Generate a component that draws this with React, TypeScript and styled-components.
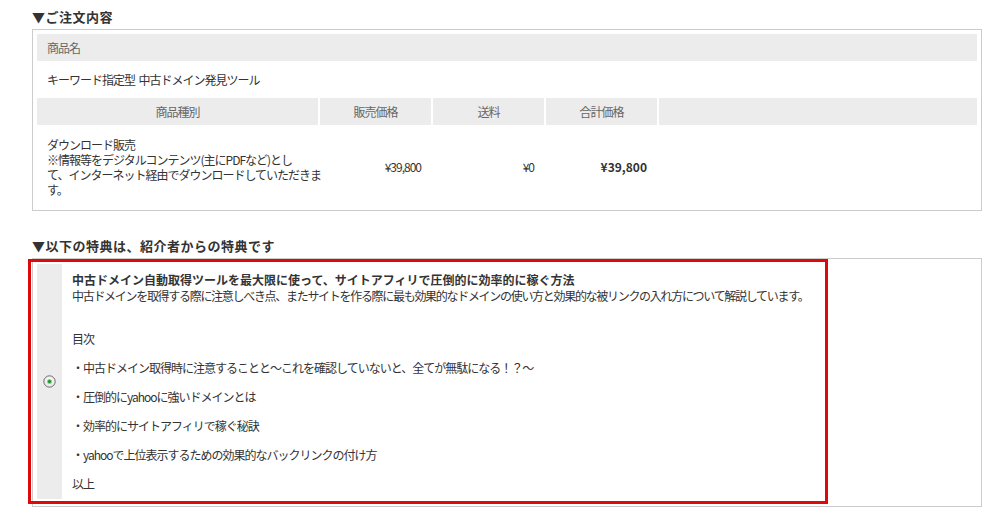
import styled, {createGlobalStyle} from 'styled-components';

const GlobalStyle = createGlobalStyle`
    body {
        margin: 0;
        background: #fff;
        color: #333;
        font-family: "Noto Sans CJK JP", "Noto Sans", sans-serif;
        font-size: 12px;
    }
`;

const Page = styled.div`
    width: 950px;
    padding: 7px 0 0 32px;
`;

const SectionTitle = styled.h2`
    margin: 0 0 2px;
    font-size: 13px;
    line-height: 20px;
    font-weight: bold;
    letter-spacing: 0.5px;
    color: #333;

    & + * {
        margin-bottom: 25px;
    }
`;

const Panel = styled.div`
    position: relative;
    border: 1px solid #ccc;
    padding: ${(props) => props.$pad || '4px'};
`;

const OrderGrid = styled.div`
    display: grid;
    grid-template-columns: 281px 111px 111px 111px 1fr;
    gap: 2px;
`;

const HeadCell = styled.div`
    grid-column: ${(props) => (props.$wide ? '1 / -1' : 'auto')};
    height: 27px;
    display: flex;
    align-items: center;
    justify-content: ${(props) => (props.$wide ? 'flex-start' : 'center')};
    padding: 0 10px;
    background: #ececec;
    color: #666;
    letter-spacing: -1px;
`;

const NameCell = styled.div`
    grid-column: 1 / -1;
    height: 33px;
    display: flex;
    align-items: center;
    padding: 0 10px;
    letter-spacing: -1px;
`;

const DataCell = styled.div`
    height: 79px;
    display: flex;
    align-items: center;
    justify-content: ${(props) => (props.$num ? 'flex-end' : 'flex-start')};
    padding: 0 10px;
    line-height: 15px;
    white-space: nowrap;
    letter-spacing: ${(props) => (props.$strong ? '0' : '-1px')};
    font-weight: ${(props) => (props.$strong ? 'bold' : 'normal')};
`;

const BonusRow = styled.div`
    display: flex;
`;

const RadioCell = styled.div`
    width: 25px;
    flex: none;
    display: flex;
    align-items: center;
    justify-content: center;
    background: #ececec;
`;

const Content = styled.div`
    padding: 8px 10px 7px;
    line-height: 16px;
    white-space: nowrap;
`;

const BonusTitle = styled.div`
    height: 16px;
    font-weight: bold;
`;

const Text = styled.p`
    height: 16px;
    margin: ${(props) => props.$gap || '13px'} 0 0;
    letter-spacing: ${(props) => (props.$tight ? '-1.3px' : '-1px')};
`;

const Highlight = styled.div`
    position: absolute;
    left: -5px;
    top: 0;
    width: 794px;
    height: 239px;
    border: 3px solid #dc0a0a;
    pointer-events: none;
`;

const Radio = () => (
    <svg width="13" height="13" viewBox="0 0 13 13">
      <defs>
        <radialGradient id="rg" cx="50%" cy="40%" r="60%">
          <stop offset="0" stopColor="#ffffff"/>
          <stop offset="1" stopColor="#e2e2e2"/>
        </radialGradient>
      </defs>
      <circle cx="6.5" cy="6.5" r="5.7" fill="url(#rg)" stroke="#6d6d6d" strokeWidth="1"/>
      <circle cx="6.5" cy="6.5" r="2.6" fill="#9fd49f"/>
      <circle cx="6.5" cy="6.5" r="1.7" fill="#22962a"/>
    </svg>
);

const bonusItems = [
  '・中古ドメイン取得時に注意することと〜これを確認していないと、全てが無駄になる！？〜',
  '・圧倒的にyahooに強いドメインとは',
  '・効率的にサイトアフィリで稼ぐ秘訣',
  '・yahooで上位表示するための効果的なバックリンクの付け方',
  '以上',
];

const App = () => {
  return (
      <Page>
        <GlobalStyle/>
        <SectionTitle>▼ご注文内容</SectionTitle>
        <Panel>
          <OrderGrid>
            <HeadCell $wide>商品名</HeadCell>
            <NameCell>キーワード指定型&nbsp;&nbsp;中古ドメイン発見ツール</NameCell>
            <HeadCell>商品種別</HeadCell>
            <HeadCell>販売価格</HeadCell>
            <HeadCell>送料</HeadCell>
            <HeadCell>合計価格</HeadCell>
            <HeadCell/>
            <DataCell>
              <div>
                ダウンロード販売<br/>
                ※情報等をデジタルコンテンツ(主にPDFなど)とし<br/>
                て、インターネット経由でダウンロードしていただきま<br/>
                す。
              </div>
            </DataCell>
            <DataCell $num>¥39,800</DataCell>
            <DataCell $num>¥0</DataCell>
            <DataCell $num $strong>¥39,800</DataCell>
            <DataCell/>
          </OrderGrid>
        </Panel>

        <SectionTitle>▼以下の特典は、紹介者からの特典です</SectionTitle>
        <Panel $pad="5px 4px 7px">
          <BonusRow>
            <RadioCell>
              <Radio/>
            </RadioCell>
            <Content>
              <BonusTitle>中古ドメイン自動取得ツールを最大限に使って、サイトアフィリで圧倒的に効率的に稼ぐ方法</BonusTitle>
              <Text $gap="0" $tight>中古ドメインを取得する際に注意しべき点、またサイトを作る際に最も効果的なドメインの使い方と効果的な被リンクの入れ方について解説しています。</Text>
              <Text $gap="27px">目次</Text>
              {bonusItems.map((item) => (
                  <Text key={item}>{item}</Text>
              ))}
            </Content>
          </BonusRow>
          <Highlight/>
        </Panel>
      </Page>
  );
};

export default App;
